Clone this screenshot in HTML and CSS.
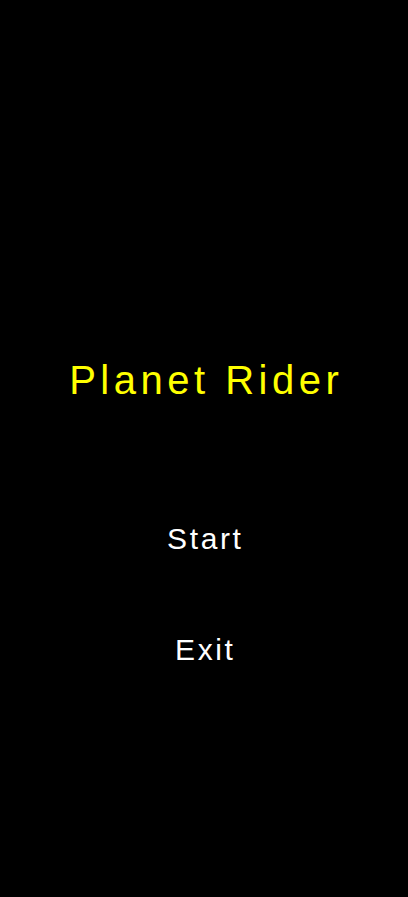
FILE: index.html
```html
<!DOCTYPE html>
<html>
<head>
<meta charset="utf-8">
<link rel="stylesheet" href="styles.css">
</head>
<body>
<main class="menu">
  <h1 class="title">Planet Rider</h1>
  <nav class="options">
    <div class="option">Start</div>
    <div class="option">Exit</div>
  </nav>
</main>
</body>
</html>
```
FILE: styles.css
```css
html, body {
  margin: 0;
  padding: 0;
  background: #000;
}
body {
  width: 408px;
  height: 897px;
  font-family: "Liberation Sans", Arial, sans-serif;
}
.menu {
  display: flex;
  flex-direction: column;
  align-items: center;
  padding-top: 360px;
}
.title {
  margin: 0;
  font-size: 40px;
  line-height: 40px;
  font-weight: normal;
  color: #ffff00;
  letter-spacing: 4.5px;
  padding-left: 4.5px;
}
.options {
  display: flex;
  flex-direction: column;
  align-items: center;
  gap: 81px;
  margin-top: 124px;
}
.option {
  font-size: 30px;
  line-height: 30px;
  color: #fff;
  letter-spacing: 2.6px;
  padding-left: 2.6px;
}
```
